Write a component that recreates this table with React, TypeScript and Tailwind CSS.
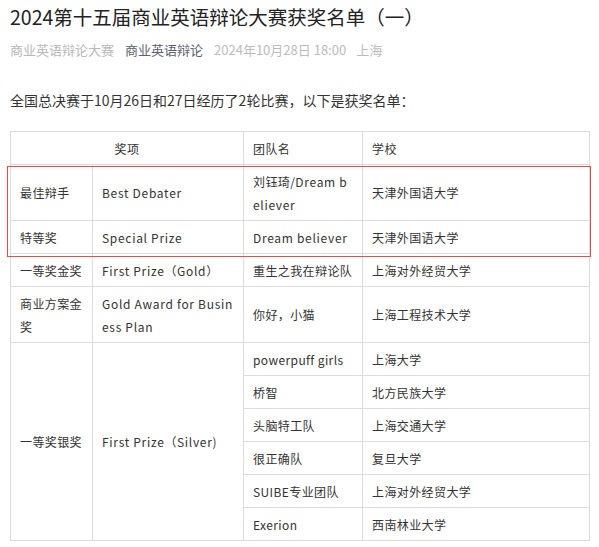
const font = { fontFamily: '"Noto Sans CJK SC", "Noto Sans", sans-serif' };

type Row = { team: string; school: string };

const silver: Row[] = [
  { team: "powerpuff girls", school: "上海大学" },
  { team: "桥智", school: "北方民族大学" },
  { team: "头脑特工队", school: "上海交通大学" },
  { team: "很正确队", school: "复旦大学" },
  { team: "SUIBE专业团队", school: "上海对外经贸大学" },
  { team: "Exerion", school: "西南林业大学" },
];

const td = "border border-[#dcdcdc] px-[9px] py-[4.5px] leading-[23px] align-middle break-all";

function En({ children }: { children: React.ReactNode }) {
  return <span className="tracking-[0.7px]">{children}</span>;
}

export default function App() {
  return (
    <main className="bg-white w-[599px] h-[547px] overflow-hidden text-[#333]" style={font}>
      <div className="px-[10px] pt-[3px]">
        <h1 className="text-[19.5px] leading-[28px] text-[#222] font-normal">
          2024第十五届商业英语辩论大赛获奖名单（一）
        </h1>
        <div className="mt-[9px] flex items-center text-[13px] leading-[20px]">
          <span className="text-[#b8b8b8]">商业英语辩论大赛</span>
          <span className="ml-[11px] text-[#5c5f6e]">商业英语辩论</span>
          <span className="ml-[11px] text-[#bcbcbc]">2024年10月28日 18:00</span>
          <span className="ml-[10px] text-[#bcbcbc]">上海</span>
        </div>
        <p className="mt-[29px] text-[14px] leading-[22px] text-[#333]">
          全国总决赛于10月26日和27日经历了2轮比赛，以下是获奖名单：
        </p>
        <div className="relative mt-[20px]">
          <table className="border-collapse table-fixed w-[579px] text-[12px] tracking-[0.4px]">
            <colgroup>
              <col className="w-[82px]" />
              <col className="w-[151px]" />
              <col className="w-[119px]" />
              <col className="w-[227px]" />
            </colgroup>
            <tbody>
              <tr>
                <td colSpan={2} className={td + " text-center"}>奖项</td>
                <td className={td}>团队名</td>
                <td className={td}>学校</td>
              </tr>
              <tr>
                <td className={td}>最佳辩手</td>
                <td className={td}><En>Best Debater</En></td>
                <td className={td}>刘钰琦/<En>Dream believer</En></td>
                <td className={td}>天津外国语大学</td>
              </tr>
              <tr>
                <td className={td}>特等奖</td>
                <td className={td}><En>Special Prize</En></td>
                <td className={td}><En>Dream believer</En></td>
                <td className={td}>天津外国语大学</td>
              </tr>
              <tr>
                <td className={td}>一等奖金奖</td>
                <td className={td}><En>First Prize</En>（<En>Gold</En>）</td>
                <td className={td}>重生之我在辩论队</td>
                <td className={td}>上海对外经贸大学</td>
              </tr>
              <tr>
                <td className={td}>商业方案金奖</td>
                <td className={td}><En>Gold Award for Business Plan</En></td>
                <td className={td}>你好，小猫</td>
                <td className={td}>上海工程技术大学</td>
              </tr>
              {silver.map((r, i) => (
                <tr key={r.team}>
                  {i === 0 && (
                    <>
                      <td rowSpan={6} className={td}>一等奖银奖</td>
                      <td rowSpan={6} className={td}><En>First Prize</En>（<En>Silver)</En></td>
                    </>
                  )}
                  <td className={td}>{r.team}</td>
                  <td className={td}>{r.school}</td>
                </tr>
              ))}
            </tbody>
          </table>
          {/* red highlight box */}
          <div className="absolute left-[-3px] top-[35px] w-[584px] h-[91px] border-[1.5px] border-[#f04848] pointer-events-none" />
        </div>
      </div>
    </main>
  );
}
